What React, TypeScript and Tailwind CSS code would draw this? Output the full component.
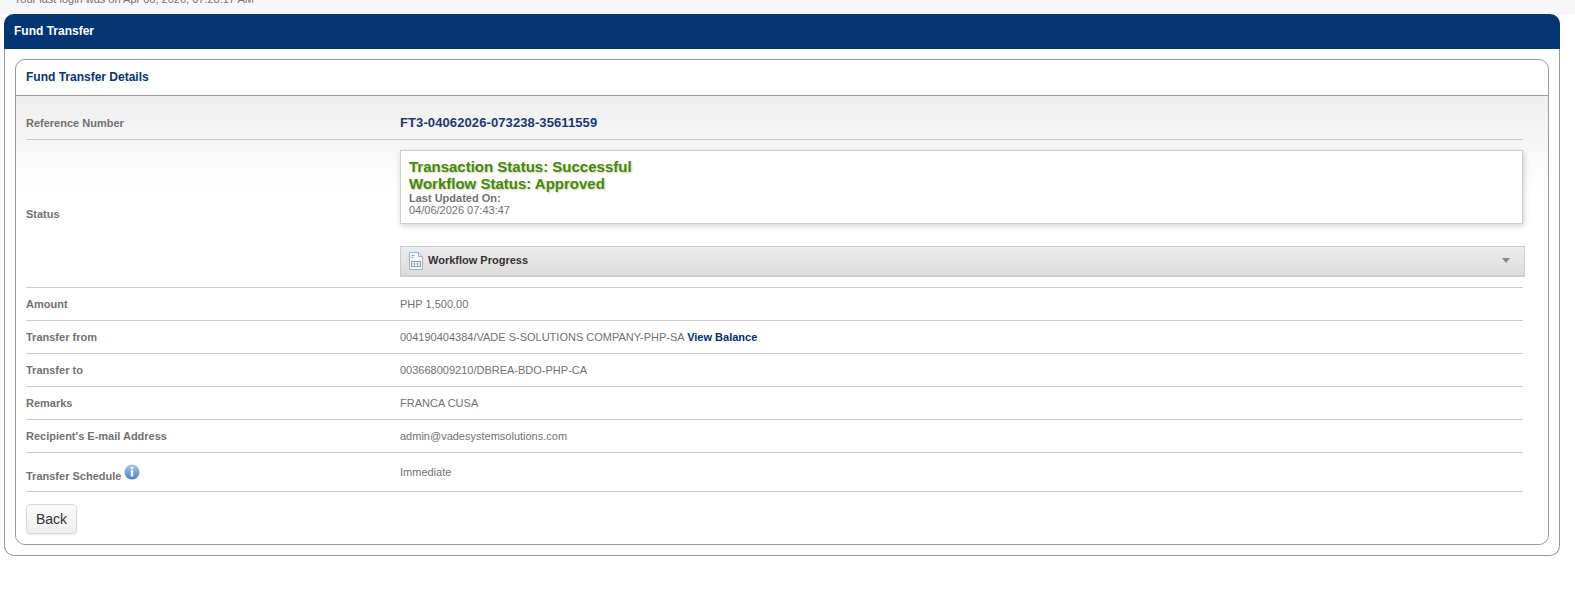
import React from "react";

function Row({ label, children, className = "" }: { label: React.ReactNode; children: React.ReactNode; className?: string }) {
  return (
    <div className={`flex items-center border-b border-[#ccc] ${className}`}>
      <div className="w-[374px] shrink-0 text-[11px] font-bold text-[#717171]">{label}</div>
      <div className="min-w-0 flex-1 text-[11px] text-[#717171]">{children}</div>
    </div>
  );
}

function DocIcon() {
  return (
    <svg width="14" height="18" viewBox="0 0 14 18" className="shrink-0">
      <path d="M.5.5h9l4 4v13H.5z" fill="#f4f7fb" stroke="#9fb1c6" />
      <path d="M9.5.5v4h4" fill="#dfe7f1" stroke="#9fb1c6" />
      <path d="M2.5 3.5h3M2.5 5.5h2" stroke="#95a5b8" />
      <rect x="2.5" y="9.5" width="9" height="5" fill="#fff" stroke="#8a9bb0" />
      <path d="M2.5 12h9M5.5 9.5v5M8.5 9.5v5" stroke="#8a9bb0" strokeWidth=".7" />
    </svg>
  );
}

function InfoIcon() {
  return (
    <svg width="16" height="16" viewBox="0 0 16 16" className="ml-[3px] -mt-[10px] inline-block align-middle">
      <defs>
        <linearGradient id="infoGrad" x1="0" y1="0" x2="0" y2="1">
          <stop offset="0" stopColor="#a9c6ef" />
          <stop offset="1" stopColor="#4f7fd0" />
        </linearGradient>
      </defs>
      <circle cx="8" cy="8" r="7.5" fill="url(#infoGrad)" />
      <rect x="6.8" y="3" width="2.4" height="2.2" fill="#fff" />
      <rect x="6.8" y="6.2" width="2.4" height="6.3" fill="#fff" />
    </svg>
  );
}

export default function App() {
  return (
    <div className="min-h-[597px] overflow-hidden bg-white font-['Liberation_Sans',Arial,sans-serif]">
      <div className="h-[14px] overflow-hidden bg-[#f7f7f7]">
        <div className="-mt-[7px] pl-[14px] text-[11px] leading-[13px] text-[#717171]">
          Your last login was on Apr 06, 2026, 07:28:17 AM
        </div>
      </div>
      <div className="ml-1 w-[1556px] rounded-[10px] border border-[#999] border-t-0">
        <div className="-mx-px flex h-[35px] items-center rounded-t-[10px] bg-[#033572] pb-[2px] pl-[10px] text-xs font-bold text-white">
          Fund Transfer
        </div>
        <div className="mx-[10px] mb-[10px] mt-[10px] rounded-[10px] border border-[#999]">
          <div className="flex h-[35px] items-center pb-[2px] pl-[10px] text-xs font-bold text-[#033572]">Fund Transfer Details</div>
          <div className="rounded-b-[10px] border-t border-[#999] bg-[linear-gradient(to_bottom,#eeeeee_0,#ffffff_95px)] pl-[10px] pr-[25px]">
            <Row label={<span className="block pt-[2px]">Reference Number</span>} className="h-[44px] pt-[10px]">
              <span className="text-[13px] font-bold tracking-[0.1px] text-[#1c3a72]">FT3-04062026-073238-35611559</span>
            </Row>
            <Row label={<span className="block pt-[2px]">Status</span>} className="h-[148px]">
              <div>
                <div className="-mt-[1px] h-[74px] border border-[#ccc] bg-white pl-2 pt-[7px] shadow-[1px_2px_6px_rgba(0,0,0,0.18)]">
                  <div className="text-[15px] font-bold leading-[17px] text-[#458a00] [text-shadow:1px_1px_2px_#c8c8c8]">
                    Transaction Status: Successful
                    <br />
                    Workflow Status: Approved
                  </div>
                  <div className="text-[11px] font-bold leading-[12px] text-[#717171]">Last Updated On:</div>
                  <div className="text-[11px] leading-[12px] text-[#717171]">04/06/2026 07:43:47</div>
                </div>
                <div className="-mr-[2px] mt-[22px] flex h-[31px] items-center border border-b-2 border-[#ccc] bg-[linear-gradient(to_bottom,#ececec,#dcdcdc)] pl-2 pr-[14px]">
                  <DocIcon />
                  <span className="ml-[5px] flex-1 text-[11px] font-bold text-[#333]">Workflow Progress</span>
                  <span className="h-0 w-0 border-x-[4px] border-t-[5px] border-x-transparent border-t-[#888]" />
                </div>
              </div>
            </Row>
            <Row label="Amount" className="h-[33px]">PHP 1,500.00</Row>
            <Row label="Transfer from" className="h-[33px]">
              004190404384/VADE S-SOLUTIONS COMPANY-PHP-SA <span className="font-bold text-[#0a2a73]">View Balance</span>
            </Row>
            <Row label="Transfer to" className="h-[33px]">003668009210/DBREA-BDO-PHP-CA</Row>
            <Row label="Remarks" className="h-[33px]">FRANCA CUSA</Row>
            <Row label="Recipient's E-mail Address" className="h-[33px]">admin@vadesystemsolutions.com</Row>
            <Row label={<span className="block pt-[8px]">Transfer Schedule<InfoIcon /></span>} className="h-[39px]">Immediate</Row>
            <div className="pb-[10px] pt-[12px]">
              <button className="h-[30px] w-[51px] rounded-[4px] border border-[#d8d8d8] bg-[linear-gradient(to_bottom,#fafafa,#efefef)] text-sm text-[#333] shadow-[0_1px_2px_rgba(0,0,0,0.08)]">
                Back
              </button>
            </div>
          </div>
        </div>
      </div>
    </div>
  );
}
